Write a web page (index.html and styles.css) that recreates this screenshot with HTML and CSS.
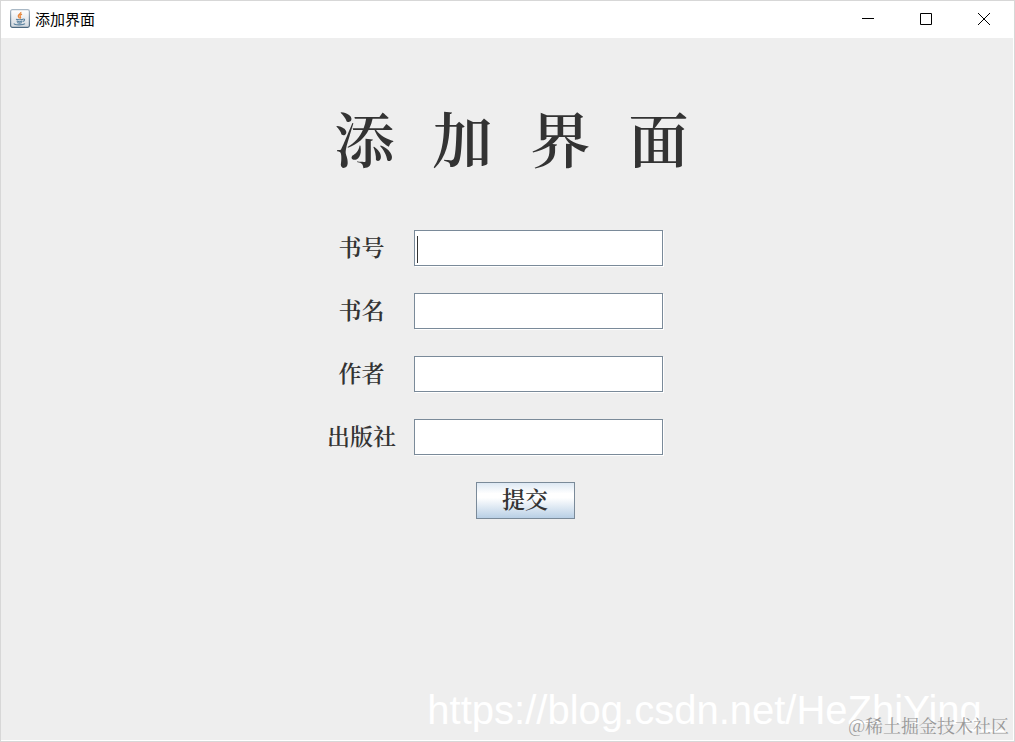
FILE: index.html
```html
<!DOCTYPE html>
<html lang="zh-CN">
<head>
<meta charset="utf-8">
<title>添加界面</title>
<link rel="stylesheet" href="styles.css">
</head>
<body>
<div class="window">
  <header class="titlebar">
    <svg class="app-icon" viewBox="0 0 20 20" aria-hidden="true">
      <defs>
        <linearGradient id="tile" x1="0" y1="0" x2="0" y2="1"><stop offset="0" stop-color="#fff"/><stop offset="1" stop-color="#d3d9df"/></linearGradient>
        <linearGradient id="edge" x1="0" y1="0" x2="0" y2="1"><stop offset="0" stop-color="#a9b8c5"/><stop offset="1" stop-color="#4d6980"/></linearGradient>
      </defs>
      <rect x="0.6" y="0.6" width="18.8" height="17.8" rx="1.8" fill="url(#tile)" stroke="url(#edge)" stroke-width="1.2"/>
      <path d="M10.800 3c.8 1.600-3.200 2.500-2.500 4.400.3.800 1 1.200 1.200 2M12 5.200c-2 .9-2.500 1.500-1.600 2.600.5.700.1 1.200-.4 1.600" fill="none" stroke="#e8873c" stroke-width="1.300"/>
      <path d="M6 10.200c1.500.700 5.500.700 7.200 0M6.600 12c1.500.700 4.500.700 5.800 0M7.200 13.600c1.300.600 3.500.600 4.600 0M13.200 10c2-.300 1.700 1.900-.300 2.500M4.200 14.400c-.800 1.800 9 2 10.800.200" fill="none" stroke="#5a829f" stroke-width="1.100"/>
    </svg>
    <span class="caption">添加界面</span>
    <div class="controls">
      <button class="control" type="button" aria-label="最小化"><svg viewBox="0 0 12 12"><path d="M0 5.500h12"/></svg></button>
      <button class="control" type="button" aria-label="最大化"><svg viewBox="0 0 12 12"><path d="M.5.5h11v11H.5z"/></svg></button>
      <button class="control" type="button" aria-label="关闭"><svg viewBox="0 0 12 12"><path d="M0 0l12 12M12 0L0 12"/></svg></button>
    </div>
  </header>
  <main class="content">
    <h1 class="heading"><span>添</span> <span>加</span> <span>界</span> <span>面</span></h1>
    <form class="form">
      <label class="label" for="book-id">书号</label>
      <div class="entry"><input class="field" id="book-id" type="text"><span class="caret"></span></div>
      <label class="label" for="book-name">书名</label>
      <div class="entry"><input class="field" id="book-name" type="text"></div>
      <label class="label" for="author">作者</label>
      <div class="entry"><input class="field" id="author" type="text"></div>
      <label class="label" for="publisher">出版社</label>
      <div class="entry"><input class="field" id="publisher" type="text"></div>
      <button class="submit" type="submit">提交</button>
    </form>
  </main>
  <div class="watermark-url">https://blog.csdn.net/HeZhiYing_</div>
  <div class="watermark-site">@稀土掘金技术社区</div>
</div>
</body>
</html>
```
FILE: styles.css
```css
* {
  box-sizing: border-box;
}

body {
  margin: 0;
  color: #333;
  font-family: "Noto Serif CJK SC", "Source Han Serif SC", "Noto Sans CJK SC", serif;
}

.window {
  position: relative;
  display: flex;
  flex-direction: column;
  min-height: 100vh;
  overflow: hidden;
  border: 1px solid #d7d7d7;
  background: #eee;
  box-shadow: inset -1px -1px #fff;
}

.titlebar {
  display: flex;
  align-items: center;
  height: 37px;
  padding: 0 1px 2px 9px;
  background: #fff;
}

.app-icon {
  width: 20px;
  height: 20px;
}

.caption {
  margin-left: 5px;
  color: #000;
  font: 15px/20px "Noto Sans CJK SC", sans-serif;
}

.controls {
  display: flex;
  height: 100%;
  margin-left: auto;
}

.control {
  display: grid;
  place-items: center;
  width: 58px;
  padding: 0;
  border: 0;
  background: transparent;
}

.control svg {
  width: 12px;
  height: 12px;
  fill: none;
  stroke: #000;
}

.content {
  display: flex;
  flex-direction: column;
  align-items: center;
  padding-top: 54px;
}

.heading {
  display: flex;
  gap: 38px;
  margin: 0 0 48px 8px;
  font-size: 60px;
  line-height: 90px;
  font-weight: 600;
}

.form {
  display: grid;
  grid-template-columns: 72px 250px;
  column-gap: 16px;
  row-gap: 26px;
  margin-right: 26px;
}

.label {
  font-size: 23px;
  line-height: 33px;
  font-weight: 600;
  text-align: center;
  white-space: nowrap;
}

.entry {
  position: relative;
  height: 37px;
}

.field {
  display: block;
  width: 249px;
  height: 36px;
  padding: 0 4px;
  border: 1px solid #7a8a99;
  border-radius: 0;
  outline: 0;
  background: #fff;
  box-shadow: 1px 1px #fff;
  font-size: 20px;
}

.caret {
  position: absolute;
  top: 6px;
  left: 3px;
  width: 1px;
  height: 27px;
  background: #333;
}

.submit {
  grid-column: 2;
  width: 99px;
  height: 37px;
  margin-left: 62px;
  padding: 0 0 4px;
  border: 1px solid #7a8a99;
  background: linear-gradient(#dde8f3, #fff 30%, #fff 42%, #b8cfe5);
  color: #333;
  font: 600 23px/31px "Noto Serif CJK SC", "Source Han Serif SC", "Noto Sans CJK SC", serif;
}

.watermark-url {
  position: absolute;
  right: 10px;
  bottom: 8px;
  color: #fff;
  font: 40px/46px "Liberation Sans", Arial, sans-serif;
}

.watermark-site {
  position: absolute;
  right: 5px;
  bottom: 4px;
  color: #999;
  font-size: 18px;
  line-height: 24px;
  font-weight: 400;
}
```
